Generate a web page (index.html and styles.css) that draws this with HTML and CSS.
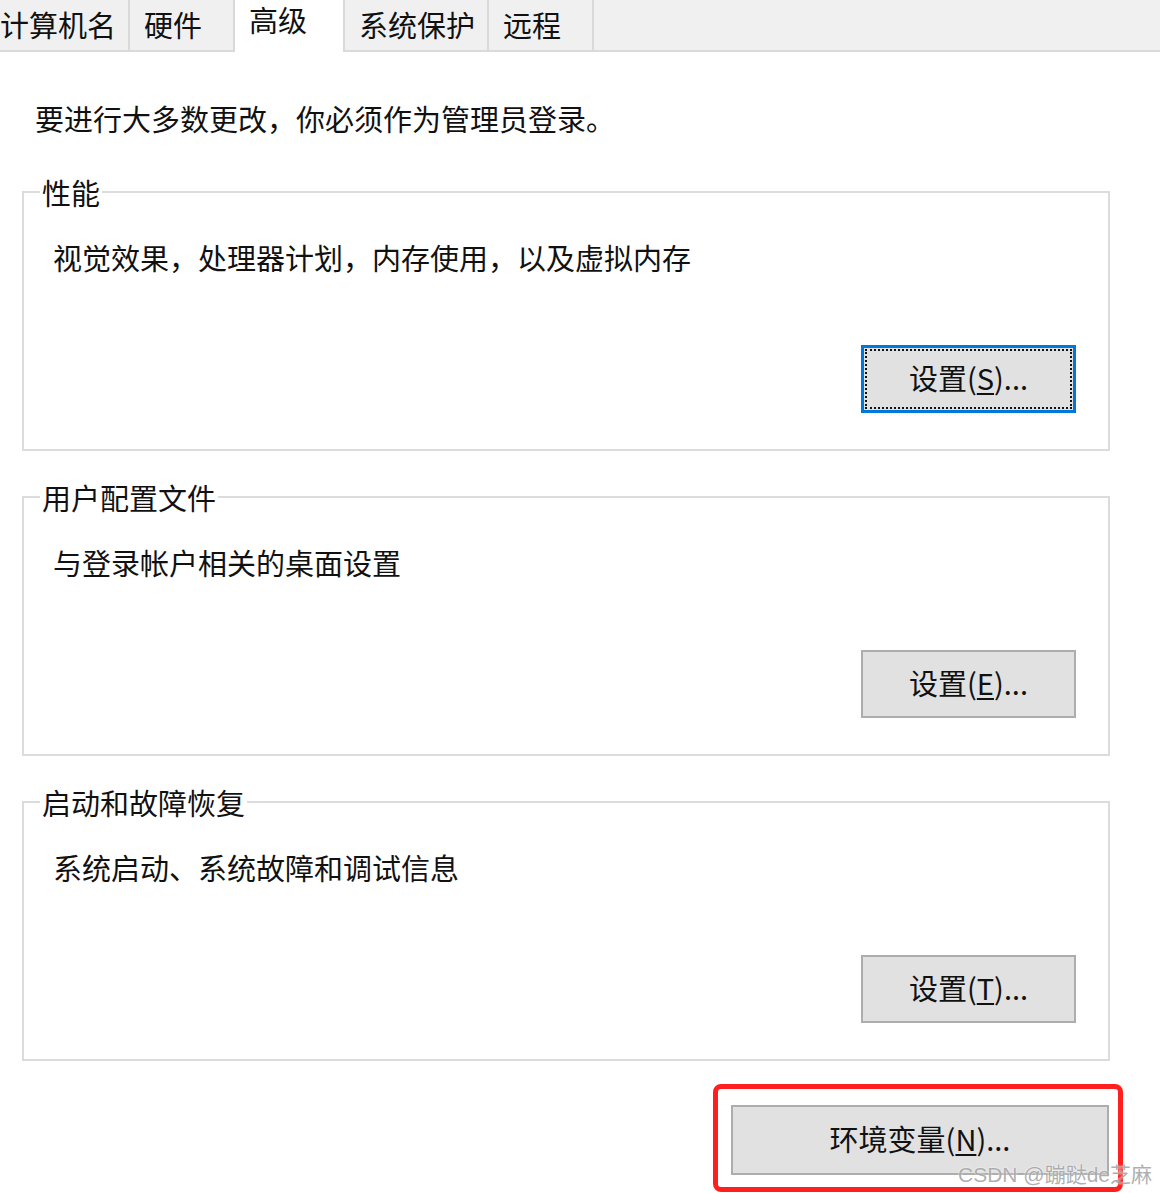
FILE: index.html
```html
<!DOCTYPE html>
<html>
<head>
    <title>系统属性 - 高级</title>
    <link rel="stylesheet" href="styles.css">
</head>
<body>
    <div class="tabs">
        <div class="tab first">计算机名</div>
        <div class="tab">硬件</div>
        <div class="tab active">高级</div>
        <div class="tab">系统保护</div>
        <div class="tab">远程</div>
    </div>

    <div class="page">
        <p class="notice">要进行大多数更改，你必须作为管理员登录。</p>

        <fieldset class="group">
            <legend>性能</legend>
            <p class="desc">视觉效果，处理器计划，内存使用，以及虚拟内存</p>
            <div class="actions">
                <button class="btn focused">设置(<u>S</u>)...</button>
            </div>
        </fieldset>

        <fieldset class="group">
            <legend>用户配置文件</legend>
            <p class="desc">与登录帐户相关的桌面设置</p>
            <div class="actions">
                <button class="btn">设置(<u>E</u>)...</button>
            </div>
        </fieldset>

        <fieldset class="group">
            <legend>启动和故障恢复</legend>
            <p class="desc">系统启动、系统故障和调试信息</p>
            <div class="actions">
                <button class="btn">设置(<u>T</u>)...</button>
            </div>
        </fieldset>

        <div class="bottom">
            <div class="highlight">
                <button class="btn wide">环境变量(<u>N</u>)...</button>
            </div>
        </div>
    </div>

    <div class="watermark">CSDN @蹦跶de芝麻</div>
</body>
</html>
```

FILE: styles.css
```css
body {
    margin: 0;
    font-family: "Noto Sans CJK SC", sans-serif;
    font-size: 29px;
    color: #111;
    background: #fff;
    overflow: hidden;
}
.tabs {
    display: flex;
    height: 50px;
    background: #f0f0f0;
    border-bottom: 2px solid #dadada;
}
.tab {
    box-sizing: border-box;
    min-width: 105px;
    height: 50px;
    padding: 0 12px 0 14px;
    line-height: 48px;
    border-right: 2px solid #d9d9d9;
    white-space: nowrap;
}
.tab.first {
    margin-left: -14px;
    padding-right: 12px;
}
.tab.active {
    height: 52px;
    min-width: 112px;
    margin-left: -2px;
    line-height: 38px;
    background: #fff;
    border-left: 2px solid #d9d9d9;
}
.page {
    position: relative;
}
.notice {
    margin: 46px 0 0 35px;
    line-height: 40px;
}
.group {
    width: 1088px;
    box-sizing: border-box;
    margin: 34px 0 0 22px;
    padding: 25px 32px 36px 29px;
    border: 2px solid #dcdcdc;
}
.group + .group {
    margin-top: 26px;
}
.group legend {
    margin-left: -13px;
    padding: 0 2px;
    line-height: 40px;
}
.desc {
    margin: 0;
    line-height: 40px;
}
.actions {
    display: flex;
    justify-content: flex-end;
    margin-top: 68px;
}
.btn {
    box-sizing: border-box;
    width: 215px;
    height: 68px;
    font-family: inherit;
    font-size: 29px;
    color: #111;
    background: #e1e1e1;
    border: 2px solid #adadad;
    padding: 0 0 4px;
}
.btn u {
    text-underline-offset: 3px;
}
.btn.focused {
    border: 3px solid #0078d7;
    outline: 2px dotted #111;
    outline-offset: -6px;
}
.bottom {
    display: flex;
    justify-content: flex-end;
    padding-right: 37px;
    margin-top: 23px;
}
.highlight {
    padding: 16px 9px 12px 13px;
    border: 5px solid #ff1f1f;
    border-radius: 8px;
}
.btn.wide {
    width: 378px;
    height: 70px;
}
.watermark {
    position: absolute;
    left: 958px;
    top: 1158px;
    font-family: "Liberation Sans", "Noto Sans CJK SC", sans-serif;
    font-size: 21px;
    color: rgba(140, 140, 140, 0.7);
    text-shadow: 0 0 2px #fff;
    white-space: nowrap;
}
```
